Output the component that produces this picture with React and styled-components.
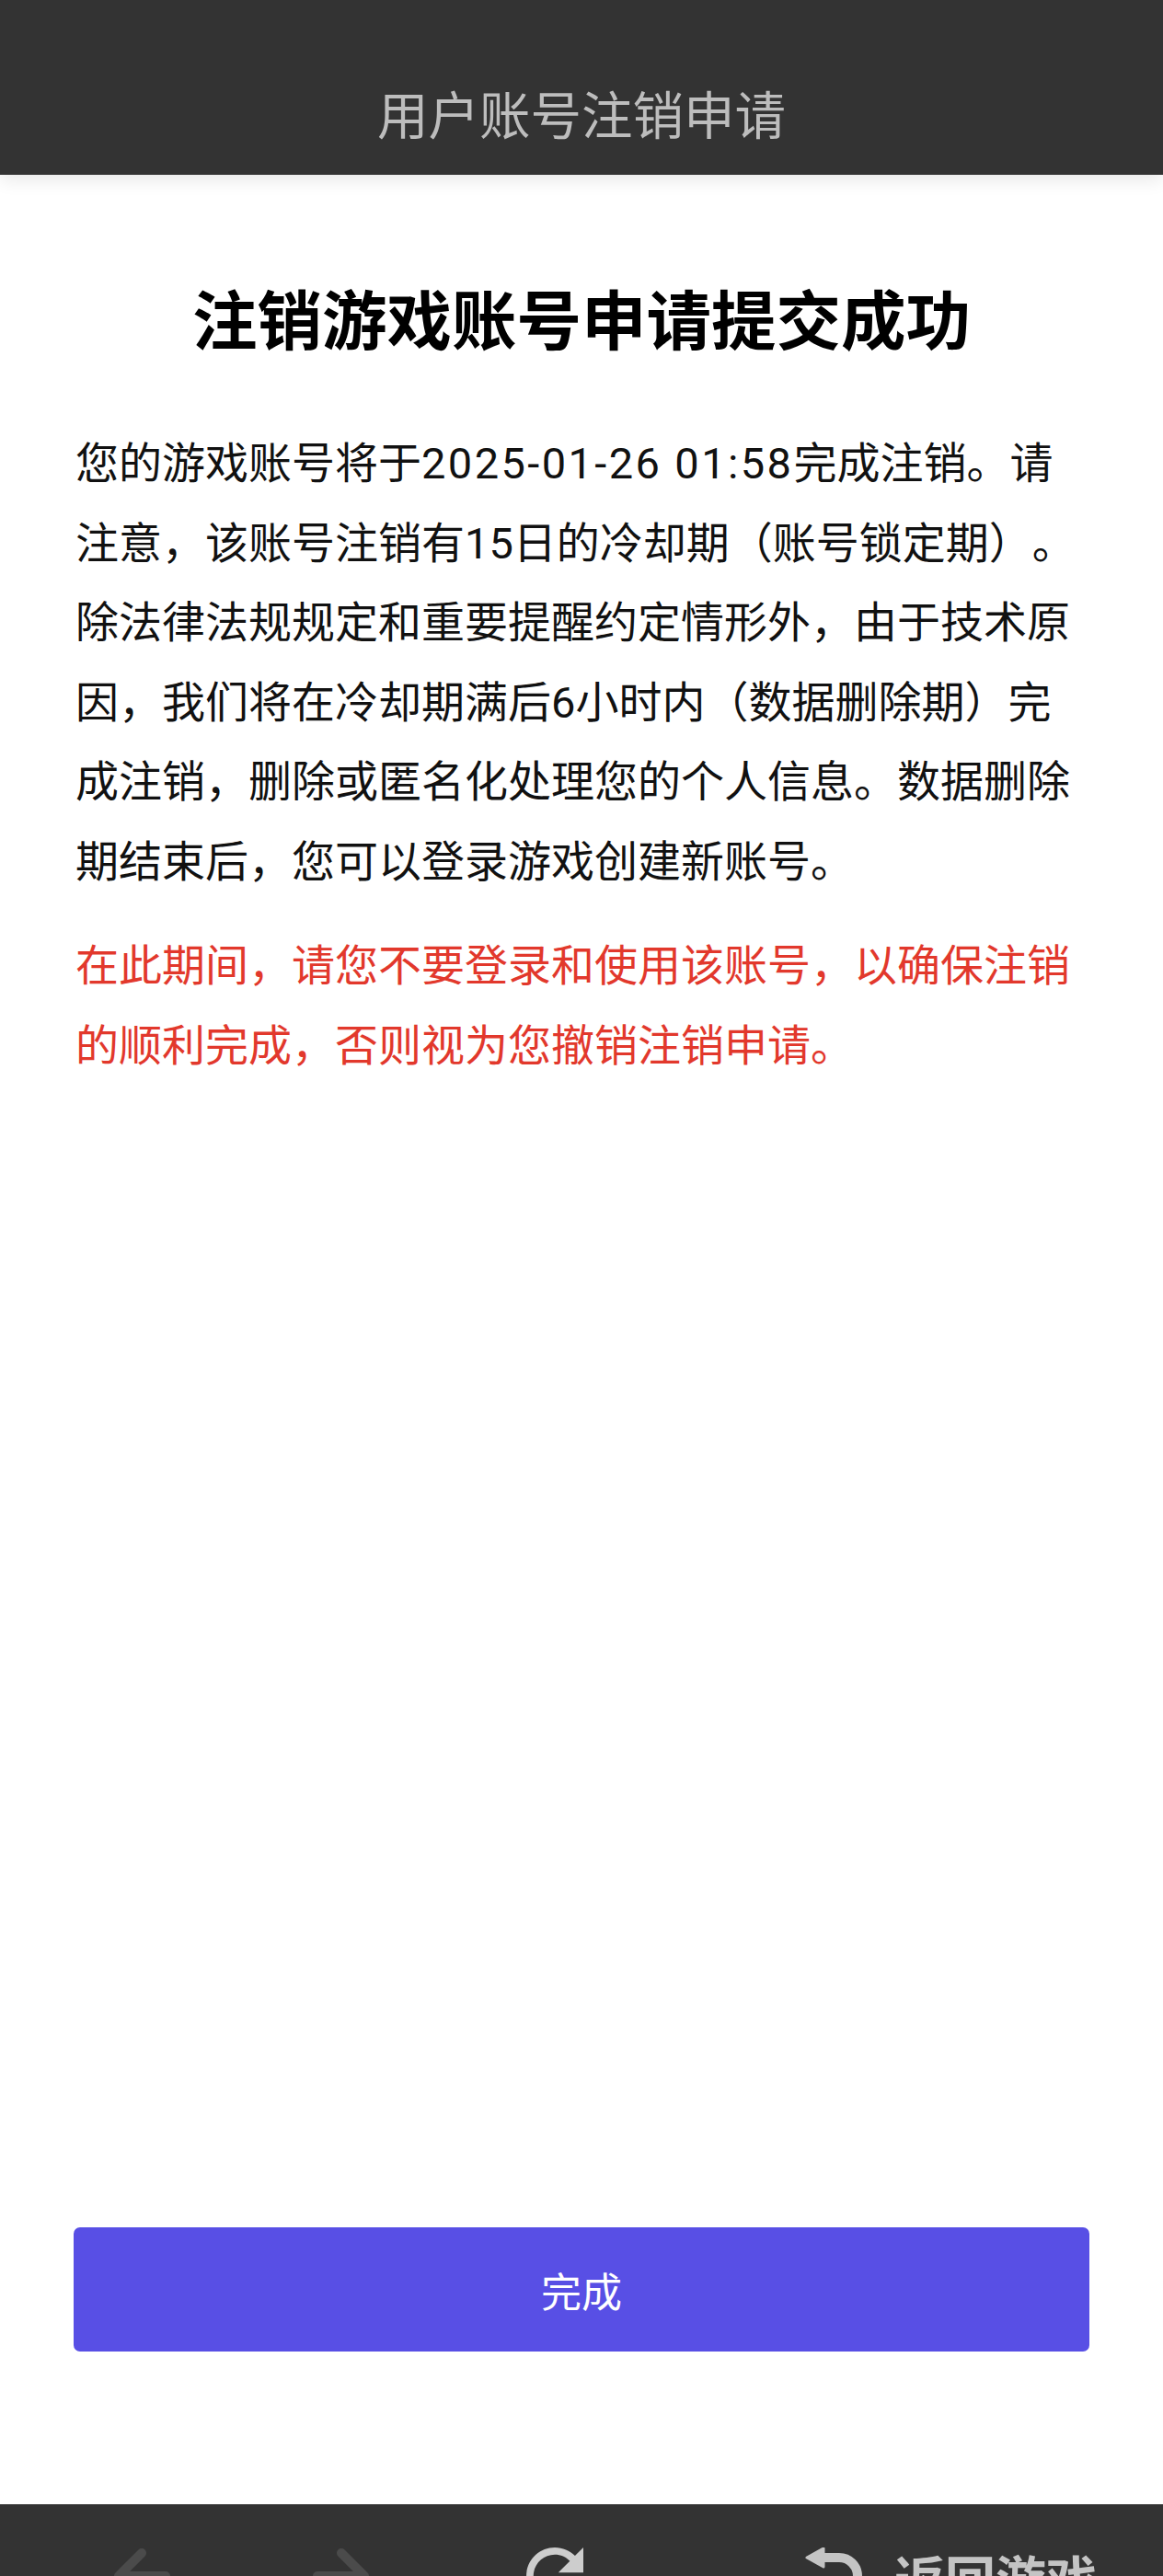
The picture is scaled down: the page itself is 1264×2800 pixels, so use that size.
import React from "react";
import styled, { createGlobalStyle } from "styled-components";

const GlobalStyle = createGlobalStyle`
  html, body {
    margin: 0;
    padding: 0;
    background: #ffffff;
  }
  body {
    font-family: "Roboto", "Noto Sans CJK SC", "Noto Sans", sans-serif;
  }
  * { box-sizing: border-box; }
`;

const Page = styled.div`
  width: 100%;
  height: 2800px;
  overflow: hidden;
  display: flex;
  flex-direction: column;
  background: #fff;
`;

const TopBar = styled.header`
  flex: none;
  height: 190px;
  padding-top: 55px;
  background: #333333;
  display: flex;
  align-items: center;
  justify-content: center;
  position: relative;
  z-index: 2;
  box-shadow: 0 6px 18px rgba(0, 0, 0, 0.09);
`;

const TopTitle = styled.h1`
  margin: 0;
  font-family: "Noto Sans CJK SC", sans-serif;
  font-weight: 400;
  font-size: 55.5px;
  line-height: 1;
  color: #bdbdbd;
`;

const Main = styled.main`
  flex: none;
  height: 2532px;
  display: flex;
  flex-direction: column;
`;

const Content = styled.section`
  padding: 0 82px;
`;

const Heading = styled.h2`
  margin: 105px 0 0;
  text-align: center;
  font-family: "Noto Sans CJK SC", sans-serif;
  font-weight: 700;
  font-size: 70.5px;
  line-height: 98px;
  color: #000;
`;

const Paragraph = styled.p`
  margin: ${(p) => p.$top}px 0 0;
  font-size: 47px;
  line-height: 86.5px;
  color: ${(p) => (p.$warn ? "#e2382c" : "#111111")};
  word-break: break-all;
  text-spacing-trim: space-all;
`;

const DateText = styled.span`
  letter-spacing: 2.4px;
`;

const ButtonArea = styled.div`
  margin-top: auto;
  margin-bottom: 166px;
  padding: 0 80px;
`;

const DoneButton = styled.button`
  width: 100%;
  height: 135px;
  border: none;
  border-radius: 7px;
  background: #584fe5;
  color: #ffffff;
  font-family: "Noto Sans CJK SC", sans-serif;
  font-size: 44px;
  display: flex;
  align-items: center;
  justify-content: center;
  cursor: pointer;
`;

const BottomBar = styled.nav`
  flex: none;
  height: 156px;
  background: #333333;
  display: flex;
  align-items: center;
  padding-left: 123px;
`;

const NavIcon = styled.span`
  display: flex;
  width: 62px;
  height: 62px;
  margin-right: ${(p) => p.$gap}px;
  color: ${(p) => (p.$dim ? "#4b4b4b" : "#cdcdcd")};
`;

const ReturnGroup = styled.div`
  display: flex;
  align-items: center;
  gap: 35px;
  color: #c4c4c4;
`;

const ReturnLabel = styled.span`
  font-family: "Noto Sans CJK SC", sans-serif;
  font-weight: 700;
  font-size: 55px;
  line-height: 1;
`;

const ArrowBack = () => (
  <svg width="62" height="62" viewBox="0 0 62 62" fill="none">
    <path
      d="M57 31H6M31 6L6 31l25 25"
      stroke="currentColor"
      strokeWidth="10"
      strokeLinecap="round"
      strokeLinejoin="round"
    />
  </svg>
);

const ArrowForward = () => (
  <svg width="62" height="62" viewBox="0 0 62 62" fill="none">
    <path
      d="M5 31h51M31 6l25 25-25 25"
      stroke="currentColor"
      strokeWidth="10"
      strokeLinecap="round"
      strokeLinejoin="round"
    />
  </svg>
);

const Refresh = () => (
  <svg width="62" height="62" viewBox="4 4 16 16" fill="currentColor">
    <path d="M17.65 6.35C16.2 4.9 14.21 4 12 4c-4.42 0-7.990 3.58-7.99 8s3.57 8 7.99 8c3.73 0 6.84-2.55 7.73-6h-2.08c-.82 2.33-3.04 4-5.65 4-3.31 0-6-2.69-6-6s2.69-6 6-6c1.66 0 3.14.69 4.22 1.78L13 11h7V4l-2.35 2.35z" />
  </svg>
);

const ReturnIcon = () => (
  <svg width="62" height="62" viewBox="0 0 62 62" fill="none">
    <path d="M2 11L20 1v20z" fill="currentColor" stroke="currentColor" strokeWidth="3" strokeLinejoin="round" />
    <path
      d="M16 11h21a20 20 0 0 1 20 20v30"
      stroke="currentColor"
      strokeWidth="10"
      strokeLinecap="round"
    />
  </svg>
);

export default function App() {
  return (
    <>
      <GlobalStyle />
      <Page>
        <TopBar>
          <TopTitle>用户账号注销申请</TopTitle>
        </TopBar>
        <Main>
          <Content>
            <Heading>注销游戏账号申请提交成功</Heading>
            <Paragraph $top={68}>
              您的游戏账号将于<DateText>2025-01-26 01:58</DateText>完成注销。请注意，该账号注销有15日的冷却期（账号锁定期）。除法律法规规定和重要提醒约定情形外，由于技术原因，我们将在冷却期满后6小时内（数据删除期）完成注销，删除或匿名化处理您的个人信息。数据删除期结束后，您可以登录游戏创建新账号。
            </Paragraph>
            <Paragraph $top={27} $warn>
              在此期间，请您不要登录和使用该账号，以确保注销的顺利完成，否则视为您撤销注销申请。
            </Paragraph>
          </Content>
          <ButtonArea>
            <DoneButton type="button">完成</DoneButton>
          </ButtonArea>
        </Main>
        <BottomBar>
          <NavIcon $dim $gap={155}>
            <ArrowBack />
          </NavIcon>
          <NavIcon $dim $gap={170}>
            <ArrowForward />
          </NavIcon>
          <NavIcon $gap={241}>
            <Refresh />
          </NavIcon>
          <ReturnGroup>
            <ReturnIcon />
            <ReturnLabel>返回游戏</ReturnLabel>
          </ReturnGroup>
        </BottomBar>
      </Page>
    </>
  );
}
